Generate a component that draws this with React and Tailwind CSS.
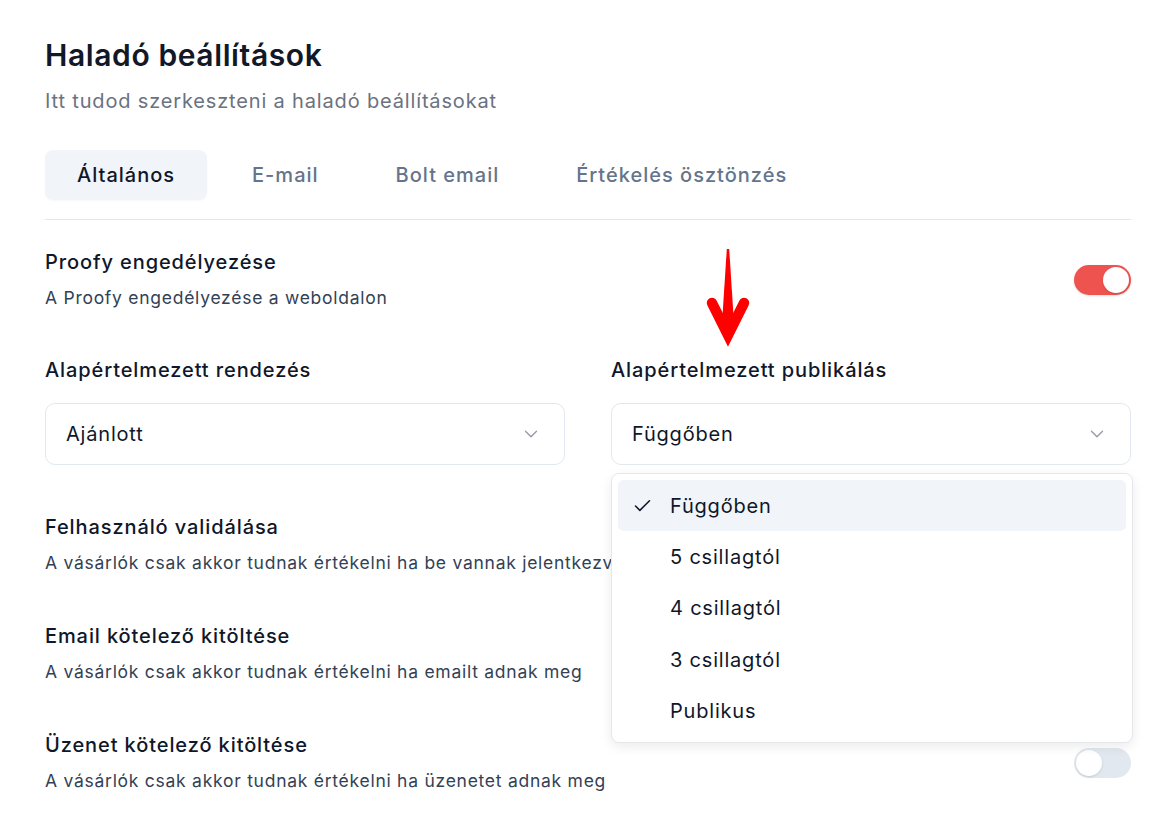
import React, { useState } from 'react';
import { Check, ChevronDown } from 'lucide-react';

const tabs = ['Általános', 'E-mail', 'Bolt email', 'Értékelés ösztönzés'];

const publishOptions = ['Függőben', '5 csillagtól', '4 csillagtól', '3 csillagtól', 'Publikus'];

const rows = [
    ['Felhasználó validálása', 'A vásárlók csak akkor tudnak értékelni ha be vannak jelentkezve'],
    ['Email kötelező kitöltése', 'A vásárlók csak akkor tudnak értékelni ha emailt adnak meg'],
    ['Üzenet kötelező kitöltése', 'A vásárlók csak akkor tudnak értékelni ha üzenetet adnak meg']
];

const Toggle = ({ on }) => (
    <div className={on
        ? 'flex h-[30px] w-[57px] shrink-0 items-center justify-end rounded-full bg-[#ef5350] p-[2px] shadow-sm'
        : 'flex h-[30px] w-[57px] shrink-0 items-center justify-start rounded-full bg-[#e2e8f0] p-[2px]'}>
        <div className="h-[26px] w-[26px] rounded-full bg-white shadow" />
    </div>
);

const SettingRow = ({ title, desc, on }) => (
    <div className="flex items-center justify-between">
        <div>
            <p className="text-[20px] font-medium leading-[28px] tracking-[0.045em] text-[#0f172a]">{title}</p>
            <p className="mt-[9px] text-[17.5px] leading-[26px] tracking-[0.042em] text-[#334155]">{desc}</p>
        </div>
        <Toggle on={on} />
    </div>
);

const SelectBox = ({ value }) => (
    <div className="flex h-[62px] items-center justify-between rounded-[10px] border border-[#e2e8f0] bg-white pl-[20px] pr-[22px]">
        <span className="text-[20px] tracking-[0.04em] text-[#0f172a]">{value}</span>
        <ChevronDown size={22} strokeWidth={1.5} className="text-[#6b7280] opacity-70" />
    </div>
);

const App = () => {
    const [active, setactive] = useState(0);
    const [publish, setpublish] = useState('Függőben');

    return (
        <div className="relative min-h-screen bg-white px-[45px] pt-[37px] font-['Inter',sans-serif]">
            <div className="w-[1086px]">
                <h1 className="text-[30px] font-semibold leading-[36px] tracking-[0.02em] text-[#111827]">Haladó beállítások</h1>
                <p className="mt-[14px] text-[20px] leading-[28px] tracking-[0.042em] text-[#6b7280]">Itt tudod szerkeszteni a haladó beállításokat</p>

                <div className="mt-[35px] border-b border-[#e5e7eb] pb-[19px]">
                    <div className="flex gap-[13px]">
                        {tabs.map((tab, i) => (
                            <button
                                key={tab}
                                onClick={() => setactive(i)}
                                className={i === active
                                    ? 'h-[50px] rounded-[8px] bg-[#f1f5f9] px-[32px] text-[20px] font-medium tracking-[0.05em] text-[#0f172a] shadow-[0_1px_2px_rgba(0,0,0,0.03)]'
                                    : 'h-[50px] rounded-[8px] px-[32px] text-[20px] font-medium tracking-[0.05em] text-[#64748b]'}
                            >
                                {tab}
                            </button>
                        ))}
                    </div>
                </div>

                <div className="mt-[28px]">
                    <SettingRow title="Proofy engedélyezése" desc="A Proofy engedélyezése a weboldalon" on />

                    <div className="mt-[45px] grid grid-cols-2 gap-[46px]">
                        <div>
                            <p className="mb-[19px] text-[20px] font-medium leading-[28px] tracking-[0.045em] text-[#0f172a]">Alapértelmezett rendezés</p>
                            <SelectBox value="Ajánlott" />
                        </div>
                        <div className="relative">
                            <p className="mb-[19px] text-[20px] font-medium leading-[28px] tracking-[0.045em] text-[#0f172a]">Alapértelmezett publikálás</p>
                            <SelectBox value={publish} />
                            <div className="absolute left-0 top-full z-10 mt-[8px] w-[522px] rounded-[8px] border border-[#e5e7eb] bg-white p-[6px] shadow-[0_4px_12px_rgba(0,0,0,0.08)]">
                                {publishOptions.map((opt) => (
                                    <div
                                        key={opt}
                                        onClick={() => setpublish(opt)}
                                        className={opt === publish
                                            ? 'relative flex h-[51.3px] items-center rounded-[6px] bg-[#f1f5f9] pl-[52px] text-[20px] tracking-[0.04em] text-[#0f172a]'
                                            : 'relative flex h-[51.3px] items-center rounded-[6px] pl-[52px] text-[20px] tracking-[0.04em] text-[#0f172a]'}
                                    >
                                        {opt === publish && (
                                            <Check size={21} strokeWidth={1.75} className="absolute left-[14px] top-1/2 -translate-y-1/2" />
                                        )}
                                        {opt}
                                    </div>
                                ))}
                            </div>
                        </div>
                    </div>

                    <div className="mt-[48px] flex flex-col gap-[46px]">
                        {rows.map((row) => (
                            <SettingRow key={row[0]} title={row[0]} desc={row[1]} />
                        ))}
                    </div>
                </div>
            </div>

            {/* annotation arrow */}
            <svg className="absolute left-[700px] top-[245px]" width="56" height="104" viewBox="0 0 56 104">
                <polygon points="26.8,4 29.2,4 34.5,86 21.5,86" fill="#ff0000" />
                <polyline points="12,58 28,90 44,58" fill="none" stroke="#ff0000" strokeWidth="10.5" strokeLinecap="round" strokeLinejoin="miter" />
            </svg>
        </div>
    );
};

export default App;
